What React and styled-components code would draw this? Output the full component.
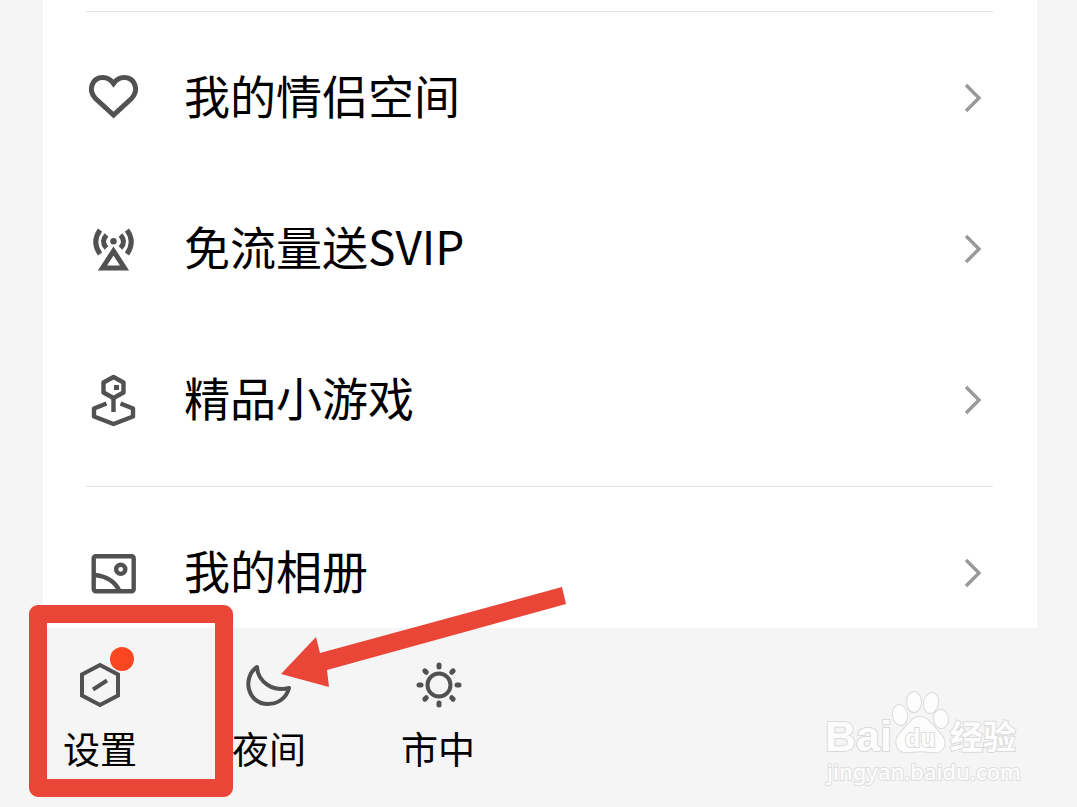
import React from "react";
import styled, { createGlobalStyle } from "styled-components";

const GlobalStyle = createGlobalStyle`
  * {
    box-sizing: border-box;
  }

  body {
    margin: 0;
    background: #f5f5f5;
    font-family: "Noto Sans CJK SC", "Liberation Sans", sans-serif;
    color: #000;
  }

  button {
    border: 0;
    padding: 0;
    background: none;
    color: inherit;
    font: inherit;
    cursor: pointer;
  }
`;

const Page = styled.div`
  position: relative;
  overflow: hidden;
`;

const Panel = styled.main`
  margin: 0 40px 0 43px;
  padding: 11px 44px 0 43px;
  background: #fff;
`;

const Divider = styled.hr`
  height: 1px;
  margin: 0 0 10px;
  border: 0;
  background: #e3e3e3;
`;

const MenuList = styled.ul`
  margin: 0;
  padding: 0 0 ${(props) => (props.$last ? 0 : 11)}px;
  list-style: none;
`;

const MenuButton = styled.button`
  display: flex;
  align-items: center;
  gap: 44px;
  width: 100%;
  padding: 42px 8px ${(props) => (props.$cut ? 22 : 42)}px 0;
  text-align: left;
`;

const MenuLabel = styled.span`
  flex: 1;
  padding-bottom: 7px;
  font-size: 46px;
  line-height: 60px;
  white-space: nowrap;
`;

const Icon = styled.svg`
  display: block;
  flex: none;
  width: ${(props) => props.$size}px;
  height: ${(props) => props.$size}px;
  overflow: visible;
  fill: none;
  stroke: ${(props) => props.$color || "#515151"};
  stroke-width: ${(props) => props.$stroke || 4};
`;

const BottomBar = styled.footer`
  display: flex;
  justify-content: space-between;
  padding: 33px 56px 20px 62px;
`;

const Actions = styled.nav`
  display: flex;
  gap: 93px;
`;

const Action = styled.button`
  position: relative;
  display: flex;
  flex-direction: column;
  align-items: center;
  gap: 17px;
  width: 76px;
  height: 126px;
`;

const ActionLabel = styled.span`
  font-size: 37px;
  line-height: 44px;
  white-space: nowrap;
`;

const Badge = styled.span`
  position: absolute;
  top: -14px;
  right: 4px;
  width: 24px;
  height: 24px;
  border-radius: 50%;
  background: #fb4622;
`;

const Highlight = styled.span`
  position: absolute;
  z-index: 1;
  top: -56px;
  left: -33px;
  width: 204px;
  height: 192px;
  border: 18px solid #e94638;
  border-radius: 9px;
  pointer-events: none;
`;

const Arrow = styled.svg`
  position: absolute;
  top: -74px;
  left: 50px;
  width: 286px;
  height: 101px;
  fill: #e94638;
  pointer-events: none;
`;

const Watermark = styled.div`
  display: flex;
  flex-direction: column;
  margin-top: 28px;
  color: #fdfdfd;
`;

const Logo = styled.svg`
  display: block;
  width: 194px;
  height: 68px;
  overflow: visible;
  fill: #fdfdfd;
  stroke: #dadada;
  stroke-width: 2;
  paint-order: stroke;
`;

const Site = styled.span`
  font-family: "Noto Sans", "Open Sans", sans-serif;
  font-size: 22px;
  font-weight: 500;
  line-height: 28px;
  -webkit-text-stroke: 2px #dfdfdf;
  paint-order: stroke;
`;

const HeartIcon = () => (
  <Icon $size={54} $stroke={5} viewBox="0 0 54 54">
    <path d="M27.5 44 9.5 27.5C1.5 19 6 6.5 17 6.5C21.5 6.5 25 9 27.5 12.5C30 9 33.5 6.5 38 6.5C49 6.5 53.5 19 45.5 27.5Z" />
  </Icon>
);

const SignalIcon = () => (
  <Icon $size={54} $stroke={5} viewBox="0 0 54 54">
    <circle cx="27.5" cy="19.3" r="3.2" fill="#515151" stroke="none" />
    <path d="M27.5 29 38.5 46H16.5Z" />
    <path d="M14 8Q5.5 20 14 32M41 8Q49.5 20 41 32M20.5 13Q14.5 19.5 20.5 26M34.5 13Q40.5 19.5 34.5 26" />
  </Icon>
);

const JoystickIcon = () => (
  <Icon $size={54} $stroke={4.4} viewBox="0 0 54 54" strokeLinejoin="round">
    <path d="m27.5 4 10 5.5v10l-10 5.5-10-5.5v-10Z" />
    <path d="M27.5 25v14M20.5 30.5 8 35.5v8L27.5 51 47 43.5v-8L34.5 30.5" />
    <path d="M28 12h5v5h-5Z" fill="#515151" stroke="none" />
  </Icon>
);

const AlbumIcon = () => (
  <Icon $size={54} $stroke={4.4} viewBox="0 0 54 54">
    <rect x="7.7" y="10.2" width="40" height="35" rx="2" />
    <circle cx="34.7" cy="23.3" r="4.6" />
    <path d="M9 29Q27 31 33.5 45" />
  </Icon>
);

const ChevronIcon = () => (
  <Icon $size={24} $stroke={3.4} $color="#999" viewBox="0 0 24 24">
    <path d="m5-1 13 13L5 25" />
  </Icon>
);

const SettingsIcon = () => (
  <Icon $size={48} viewBox="0 0 48 48">
    <path d="m24 4 18 9.5v21L24 44 6 34.5v-21ZM17 28.5l14-9" />
  </Icon>
);

const MoonIcon = () => (
  <Icon $size={48} viewBox="0 0 48 48" strokeLinejoin="round">
    <path d="M12 6C-3 16 2 43 23 43c10 0 18.5-6 21-16C29 31 13 22 12 6Z" />
  </Icon>
);

const SunIcon = () => (
  <Icon $size={48} viewBox="0 0 48 48" strokeLinecap="round">
    <circle cx="25" cy="24" r="11.5" />
    {[0, 45, 90, 135, 180, 225, 270, 315].map((angle) => (
      <path
        key={angle}
        d="M25 4v2"
        strokeWidth="5"
        transform={`rotate(${angle} 25 24)`}
      />
    ))}
  </Icon>
);

const BaiduLogo = () => (
  <Logo viewBox="0 0 194 68" role="img" aria-label="Baidu 经验">
    <text
      x="-2"
      y="62"
      fontFamily="Liberation Sans, sans-serif"
      fontSize="43"
      fontWeight="700"
    >
      Bai
    </text>
    <ellipse cx="73" cy="26" rx="7" ry="10" transform="rotate(-8 73 26)" />
    <ellipse cx="87" cy="13" rx="7" ry="10" />
    <ellipse cx="104" cy="14" rx="7" ry="10" transform="rotate(12 104 14)" />
    <ellipse cx="114" cy="30" rx="7" ry="9" transform="rotate(-8 114 30)" />
    <path d="M93 28c-8 0-10 6-16 12-7 7-9 10-7 17 2 6 8 7 14 6 6-1 13-1 19 0 7 1 12 0 14-6 2-7-2-10-8-17-5-5-8-12-16-12Z" />
    <text
      x="78"
      y="58"
      fontFamily="Liberation Sans, sans-serif"
      fontSize="25"
      fontWeight="700"
    >
      du
    </text>
    <text
      x="123"
      y="60"
      fontFamily="Noto Sans CJK SC, sans-serif"
      fontSize="33"
      fontWeight="700"
    >
      经验
    </text>
  </Logo>
);

const services = [
  { label: "我的情侣空间", icon: HeartIcon },
  { label: "免流量送SVIP", icon: SignalIcon },
  { label: "精品小游戏", icon: JoystickIcon },
];

const personal = [{ label: "我的相册", icon: AlbumIcon }];

const Menu = ({ items, last }) => (
  <MenuList $last={last}>
    {items.map(({ label, icon: ItemIcon }) => (
      <li key={label}>
        <MenuButton type="button" $cut={last}>
          <ItemIcon />
          <MenuLabel>{label}</MenuLabel>
          <ChevronIcon />
        </MenuButton>
      </li>
    ))}
  </MenuList>
);

const App = () => {
  return (
    <>
      <GlobalStyle />
      <Page>
        <Panel>
          <Divider />
          <Menu items={services} />
          <Divider />
          <Menu items={personal} last />
        </Panel>
        <BottomBar>
          <Actions>
            <Action type="button">
              <SettingsIcon />
              <ActionLabel>设置</ActionLabel>
              <Badge />
              <Highlight />
            </Action>
            <Action type="button">
              <MoonIcon />
              <ActionLabel>夜间</ActionLabel>
              <Arrow viewBox="0 0 286 101">
                <path d="M0 87 35 50 39 66 281 0 285 17 46 83 48 100Z" />
              </Arrow>
            </Action>
            <Action type="button">
              <SunIcon />
              <ActionLabel>市中</ActionLabel>
            </Action>
          </Actions>
          <Watermark>
            <BaiduLogo />
            <Site>jingyan.baidu.com</Site>
          </Watermark>
        </BottomBar>
      </Page>
    </>
  );
};

export default App;
